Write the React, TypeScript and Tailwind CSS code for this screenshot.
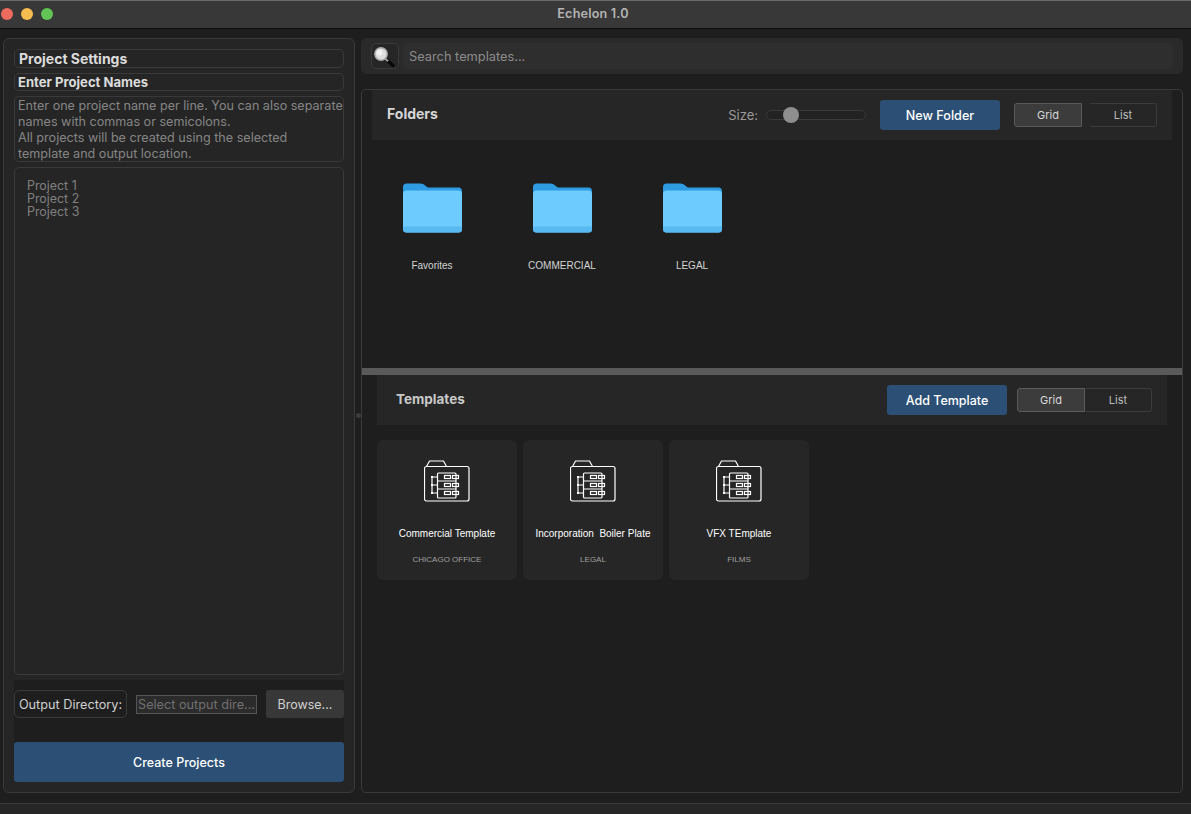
import type { ReactNode } from "react"

const folders = ["Favorites", "COMMERCIAL", "LEGAL"]

const templates = [
  { name: "Commercial Template", group: "CHICAGO OFFICE" },
  { name: "Incorporation  Boiler Plate", group: "LEGAL" },
  { name: "VFX TEmplate", group: "FILMS" },
]

function FolderIcon() {
  return (
    <svg width="60" height="50" viewBox="0 0 60 50" className="ml-[1px]">
      <path d="M0 4a3.500 3.500 0 0 1 3.500-3.500h14c2 0 3 .7 4.300 1.800l2 1.500c.8.600 1.400.8 2.700.8h30a3.500 3.500 0 0 1 2.500 3.500v10H0z" fill="#2f9be0" />
      <path d="M0 11a3.500 3.500 0 0 1 3.500-3.500h52a3.500 3.500 0 0 1 3.500 3.500v35a3.500 3.500 0 0 1-3.500 3.500h-52a3.500 3.500 0 0 1-3.500-3.500z" fill="#6ecbfd" />
      <path d="M0 43.500h59v2.500a3.500 3.500 0 0 1-3.500 3.500h-52a3.500 3.500 0 0 1-3.500-3.500z" fill="#58b8f0" />
    </svg>
  )
}

function TemplateIcon() {
  return (
    <svg width="46" height="42" viewBox="0 0 46 42" fill="none" stroke="#ffffff" strokeWidth="1.200">
      <path d="M2.500 6.500 5.500 1h14l3 5.500" />
      <rect x="0.500" y="6.500" width="44.500" height="34.500" rx="2" />
      <rect x="13.500" y="13" width="18.500" height="25" rx="1" />
      <path d="M13.500 21h18.500M13.500 29h18.500" />
      <path d="M8 17v16M8 17h5.500M8 25h5.500M8 33h5.500" />
      {[15, 23, 31].map((y) => (
        <g key={y}>
          <rect x="20.500" y={y + 0.5} width="6" height="3" />
          <rect x="28.500" y={y + 0.5} width="6" height="3" />
          <rect x="7" y={y + 1} width="2" height="2" fill="#ffffff" stroke="none" />
        </g>
      ))}
    </svg>
  )
}

function SearchGlyph() {
  return (
    <svg width="22" height="22" viewBox="0 0 22 22">
      <path d="M11 13.500 19 20.500" stroke="#050505" strokeWidth="3" strokeLinecap="round" />
      <path d="M11 13.500 14 16.200" stroke="#9a9a9a" strokeWidth="2.200" />
      <circle cx="7" cy="9" r="6.200" fill="#dedede" stroke="#a8a8a8" strokeWidth="1.400" />
      <circle cx="5.500" cy="7.500" r="3" fill="#f2f2f2" />
    </svg>
  )
}

function ViewToggle({ gap }: { gap: boolean }) {
  return (
    <div className={`flex h-6 text-[11px] ${gap ? "gap-2" : ""}`}>
      <button className={`h-6 w-[68px] bg-[#3c3c3c] border border-[#5a5a5a] rounded-l-[3px] text-[#d8d8d8] ${gap ? "rounded-r-[1px]" : ""}`}>Grid</button>
      <button className="h-6 w-[67px] bg-[#262626] border border-l-0 border-[#3b3b3b] rounded-r-[3px] text-[#bdbdbd]">List</button>
    </div>
  )
}

function SectionHeader({ className, children }: { className: string; children: ReactNode }) {
  return <div className={`h-[50px] bg-[#262626] flex items-center shrink-0 ${className}`}>{children}</div>
}

export default function App() {
  return (
    <div className="w-full h-[814px] bg-[#1e1e1e] flex flex-col overflow-hidden antialiased font-['Inter',sans-serif]">
      {/* Title bar */}
      <div className="relative h-[29px] shrink-0 bg-[#383838] border-t border-t-[#6a6a6a] border-b border-b-[#0c0c0c] flex items-center justify-center pr-[5px]">
        <div className="absolute left-[1px] top-[7px] flex gap-2">
          <span className="w-3 h-3 rounded-full bg-[#ee6a5f]" />
          <span className="w-3 h-3 rounded-full bg-[#f5bd4f]" />
          <span className="w-3 h-3 rounded-full bg-[#61c454]" />
        </div>
        <span className="text-[12.600px] font-semibold text-[#b4b4b4] tracking-[0.2px]">Echelon 1.0</span>
      </div>

      {/* Main area */}
      <div className="flex-1 min-h-0 flex pt-[9px] pl-[3px] pr-2 pb-[10px]">
        {/* Project settings */}
        <div className="w-[352px] shrink-0 bg-[#252525] border border-[#3a3a3a] rounded-md pt-[10px] px-[10px] pb-[10px] flex flex-col">
          <div className="h-[19px] border border-[#3a3a3a] rounded-[5px] flex items-center px-1 text-[14px] font-bold text-[#dcdcdc] shrink-0">Project Settings</div>
          <div className="mt-[5px] h-[18px] border border-[#3a3a3a] rounded-[5px] flex items-center px-[3px] pt-[1px] text-[13.100px] font-bold text-[#dcdcdc] shrink-0">Enter Project Names</div>
          <div className="mt-[5px] h-[66px] border border-[#3a3a3a] rounded-[5px] px-[3px] pt-[1px] text-[12.600px] leading-[16px] text-[#858585] shrink-0 whitespace-nowrap overflow-hidden">
            Enter one project name per line. You can also separate
            <br />
            names with commas or semicolons.
            <br />
            All projects will be created using the selected
            <br />
            template and output location.
          </div>
          <div className="mt-[5px] flex-1 min-h-0 border border-[#3a3a3a] rounded-[5px] pt-[11px] pl-3 text-[12.400px] leading-[13px] text-[#808080]">
            Project 1
            <br />
            Project 2
            <br />
            Project 3
          </div>
          <div className="mt-[5px] bg-[#1e1e1e] shrink-0">
            <div className="h-[62px] pt-[10px]">
              <div className="flex items-center h-7">
                <div className="w-[113px] h-7 border border-[#3a3a3a] rounded-[5px] flex items-center justify-center pt-[2px] text-[12.700px] text-[#d0d0d0] whitespace-nowrap">Output Directory:</div>
                <div className="ml-[9px] w-[121px] h-[19px] bg-[#2b2b2b] border border-[#555555] flex items-center justify-center pt-[1px] text-[12.700px] text-[#707070] whitespace-nowrap overflow-hidden">Select output dire...</div>
                <button className="ml-[9px] w-[78px] h-7 bg-[#383838] rounded-[3px] pt-[2px] text-[12.500px] text-[#d0d0d0]">Browse...</button>
              </div>
            </div>
            <button className="w-full h-10 bg-[#2c5075] rounded-[3px] pt-[2px] text-[12.500px] font-medium text-white">Create Projects</button>
          </div>
        </div>

        {/* Splitter */}
        <div className="w-[6px] shrink-0 flex items-center justify-center">
          <span className="w-[5px] h-[5px] rounded-full bg-[#3c3c3c]" />
        </div>

        {/* Right column */}
        <div className="flex-1 min-w-0 flex flex-col">
          <div className="h-9 shrink-0 bg-[#2a2a2a] rounded-md pl-[10px] pr-[10px] flex items-center">
            <div className="w-[28px] h-[26px] border border-[#3a3a3a] rounded-[5px] bg-[#262626] flex items-center justify-center shrink-0">
              <SearchGlyph />
            </div>
            <div className="ml-[4px] flex-1 h-[26px] bg-[#2e2e2e] rounded-[3px] flex items-center px-[6px] pt-[2px] text-[12.800px] text-[#8c8c8c]">Search templates...</div>
          </div>

          <div className="mt-[15px] flex-1 min-h-0 border border-[#3a3a3a] rounded-[5px] flex flex-col">
            {/* Folders */}
            <div className="h-[278px] shrink-0 flex flex-col">
              <SectionHeader className="mx-[10px] pl-[15px] pr-[15px]">
                <span className="pb-[3px] text-[14px] font-bold text-[#d6d6d6]">Folders</span>
                <div className="ml-auto flex items-center">
                  <span className="pt-[1px] text-[13px] text-[#9a9a9a]">Size:</span>
                  <div className="relative ml-2 w-[100px] h-[10px] bg-[#222222] border border-[#3a3a3a] rounded-full">
                    <span className="absolute left-[16px] top-[-4px] w-4 h-4 rounded-full bg-[#8e8e8e]" />
                  </div>
                  <button className="ml-[14px] w-[120px] h-[30px] bg-[#2c5075] rounded-[3px] pt-[2px] text-[12.600px] font-medium text-white">New Folder</button>
                  <div className="ml-[14px]">
                    <ViewToggle gap />
                  </div>
                </div>
              </SectionHeader>
              <div className="flex pl-[5px] pt-[43px]">
                {folders.map((f) => (
                  <div key={f} className="w-[130px] flex flex-col items-center">
                    <FolderIcon />
                    <span className="mt-[27px] text-[10px] leading-3 text-[#d4d4d4] font-['Liberation_Sans',sans-serif]">{f}</span>
                  </div>
                ))}
              </div>
            </div>

            <div className="h-[7px] shrink-0 bg-[#5a5a5a]" />

            {/* Templates */}
            <SectionHeader className="mx-[15px] pl-[19px] pr-[15px]">
              <span className="pb-[2px] text-[13.500px] font-bold text-[#c8c8c8]">Templates</span>
              <div className="ml-auto flex items-center">
                <button className="w-[120px] h-[30px] bg-[#2c5075] rounded-[3px] pt-[2px] text-[12.500px] font-medium text-white">Add Template</button>
                <div className="ml-[10px]">
                  <ViewToggle gap={false} />
                </div>
              </div>
            </SectionHeader>
            <div className="flex gap-[6px] mx-[15px] mt-[15px]">
              {templates.map((t) => (
                <div key={t.name} className="w-[140px] h-[140px] bg-[#262626] rounded-md flex flex-col items-center pt-5 font-['Liberation_Sans',sans-serif]">
                  <TemplateIcon />
                  <span className="mt-[26px] text-[10px] leading-3 text-white whitespace-pre">{t.name}</span>
                  <span className="mt-[15px] text-[8px] leading-[10px] text-[#a0a0a0]">{t.group}</span>
                </div>
              ))}
            </div>
          </div>
        </div>
      </div>

      {/* Status bar */}
      <div className="h-[11px] shrink-0 bg-[#262626] border-t border-[#3a3a3a]" />
    </div>
  )
}
